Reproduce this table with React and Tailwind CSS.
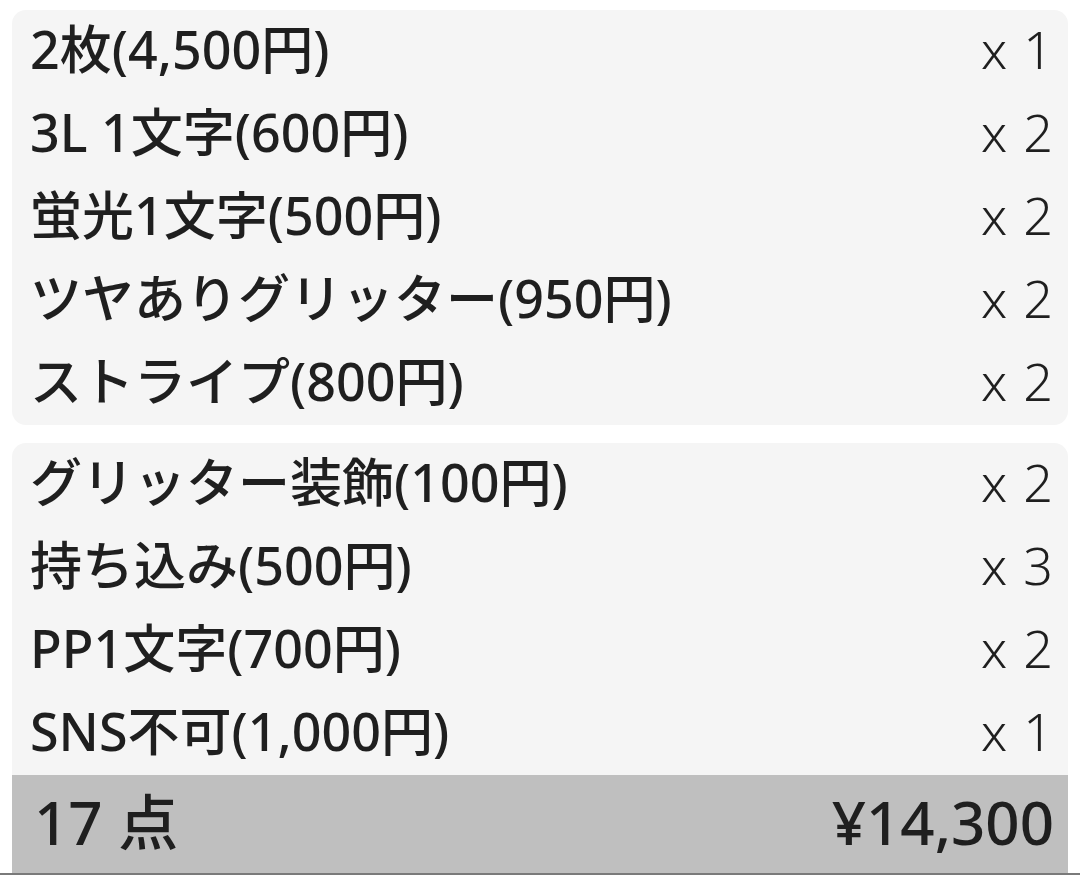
const groupA = [
  { name: "2枚(4,500円)", qty: 1 },
  { name: "3L 1文字(600円)", qty: 2 },
  { name: "蛍光1文字(500円)", qty: 2 },
  { name: "ツヤありグリッター(950円)", qty: 2 },
  { name: "ストライプ(800円)", qty: 2 },
];

const groupB = [
  { name: "グリッター装飾(100円)", qty: 2 },
  { name: "持ち込み(500円)", qty: 3 },
  { name: "PP1文字(700円)", qty: 2 },
  { name: "SNS不可(1,000円)", qty: 1 },
];

function Row({ item }) {
  return (
    <div className="flex h-[83px] items-center justify-between pb-[5px] pl-[18px] pr-[15px]">
      <span className="font-medium">{item.name}</span>
      <span className="flex gap-[16px] font-light">
        <span>x</span>
        <span>{item.qty}</span>
      </span>
    </div>
  );
}

export default function App() {
  return (
    <div
      className="min-h-screen bg-white text-[#1f1f1f] text-[52px] leading-none"
      style={{ fontFamily: '"Noto Sans", "Noto Sans CJK JP", sans-serif' }}
    >
      <div className="px-[12px] pt-[10px]">
        {/* first group */}
        <div className="rounded-[14px] bg-[#f5f5f5]">
          {groupA.map((it) => (
            <Row key={it.name} item={it} />
          ))}
        </div>

        {/* second group + total */}
        <div className="mt-[18px] rounded-t-[14px] bg-[#f5f5f5]">
          {groupB.map((it) => (
            <Row key={it.name} item={it} />
          ))}
        </div>
        <div className="flex h-[98px] items-center justify-between bg-[#bfbfbf] pb-[4px] pl-[22px] pr-[14px] text-[60px] font-medium">
          <span>17 点</span>
          <span>¥14,300</span>
        </div>
      </div>
      <div className="h-[2px] bg-[#7a7a7a]" />
    </div>
  );
}
